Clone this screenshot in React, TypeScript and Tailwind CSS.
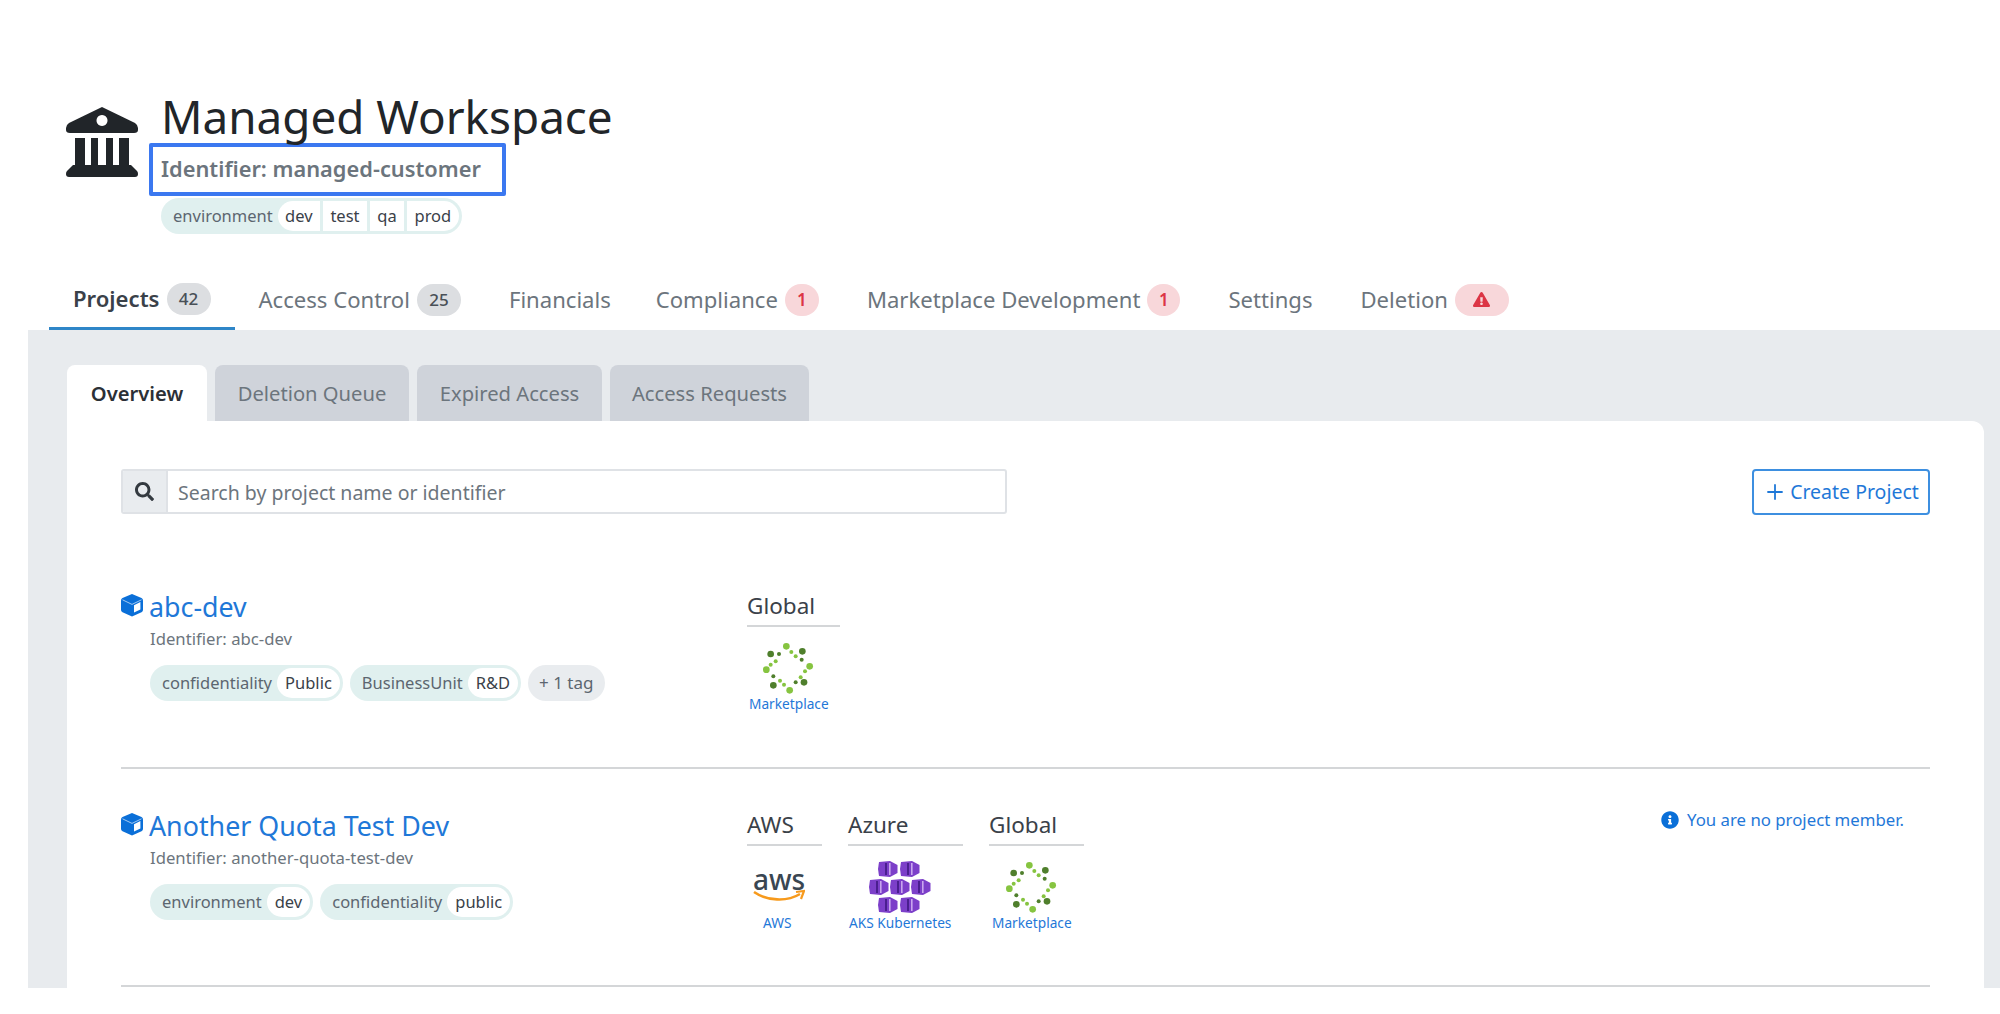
import React from "react";
import { FaSearch, FaInfoCircle, FaExclamationTriangle } from "react-icons/fa";
import { Plus } from "lucide-react";

function BankIcon() {
  return (
    <svg className="mt-[17px] ml-[4px] shrink-0" width="72" height="70" viewBox="0 0 72 70" fill="#212529">
      <path fillRule="evenodd" d="M36 0 L69 16 Q72 18 72 21 V23 Q72 26 68 26 H4 Q0 26 0 23 V21 Q0 18 3 16 Z M36 8 a5.5 5.5 0 1 0 0.01 0 Z" />
      <rect x="9" y="31" width="10" height="27" />
      <rect x="25" y="31" width="7" height="27" />
      <rect x="40" y="31" width="7" height="27" />
      <rect x="53" y="31" width="10" height="27" />
      <path d="M7 58 H65 L71 64 Q72 65 72 67 Q72 70 69 70 H3 Q0 70 0 67 Q0 65 1 64 Z" />
    </svg>
  );
}

function CubeIcon() {
  return (
    <svg className="mb-[5px] ml-[-1px] shrink-0" width="24" height="24" viewBox="0 0 24 24">
      <path d="M12 1 L21.5 5 Q23 5.8 23 7.5 V17 Q23 18.5 21.5 19.2 L12 23.5 L2.5 19.2 Q1 18.5 1 17 V7.5 Q1 5.8 2.5 5 Z" fill="#0a6fd8" />
      <path d="M14 12.2 L20.4 9 V16.6 L14 19.6 Z" fill="#ffffff" />
      <path d="M2.5 6.8 L12 11.4 L21.5 6.8" stroke="#ffffff" strokeWidth="0.9" fill="none" opacity="0.7" />
    </svg>
  );
}

function MarketplaceLogo({ size = 52 }: { size?: number }) {
  const light = "#86c440";
  const dark = "#4f7f2c";
  const big: [number, number, string][] = [
    [197, 195, light], [267, 255, light], [207, 327, light], [137, 265, light],
    [150, 218, dark], [245, 210, dark], [250, 303, dark], [158, 312, dark],
  ];
  const small: [number, number, string][] = [
    [175, 218, dark], [212, 212, light], [225, 225, light], [243, 235, dark],
    [253, 270, light], [240, 288, light], [225, 303, dark], [190, 310, light],
    [178, 298, light], [158, 285, dark], [150, 250, light], [165, 240, light],
  ];
  return (
    <svg width={size} height={size} viewBox="124 182 156 156">
      {big.map(([x, y, c], i) => <circle key={i} cx={x} cy={y} r={10} fill={c} />)}
      {small.map(([x, y, c], i) => <circle key={i} cx={x} cy={y} r={6} fill={c} />)}
    </svg>
  );
}

function AksLogo() {
  const cells: [number, number][] = [[9, 0], [31, 0], [0, 18], [21, 18], [42, 18], [9, 36], [31, 36]];
  return (
    <svg width="62" height="52" viewBox="0 0 62 52">
      {cells.map(([x, y], i) => (
        <g key={i} transform={`translate(${x} ${y})`}>
          <path d="M1 1 L12 0 L19.5 4 V12 L12 16 L1 15 L0 8 Z" fill="#7c3fc9" />
          <rect x="7" y="2" width="2" height="12" fill="#4a1f8f" />
          <rect x="11" y="2" width="1.6" height="12" fill="#c9a6ee" />
        </g>
      ))}
    </svg>
  );
}

function AwsLogo() {
  return (
    <div className="relative flex h-[32px] w-[52px] flex-col items-center">
      <span className="mt-[-6px] text-[28px] leading-[28px] font-medium text-[#3a4652]">aws</span>
      <svg className="absolute bottom-0 left-0" width="52" height="14" viewBox="0 0 52 14" fill="none">
        <path d="M1 3 C14 12 34 13 47 5" stroke="#f79a1c" strokeWidth="2.6" />
        <path d="M43 3 L51 2 L48 10" stroke="#f79a1c" strokeWidth="2.2" />
      </svg>
    </div>
  );
}

function Tag({ name, values, tight }: { name: string; values: string[]; tight?: boolean }) {
  return (
    <span className="flex h-9 items-center rounded-full bg-[#e0f0ef] pr-[3px] pl-[12px] text-[16.5px] text-[#5c6670]">
      <span className="mr-[5px]">{name}</span>
      <span className="flex h-[30px] items-center gap-[3px] overflow-hidden rounded-full">
        {values.map((v) => (
          <span key={v} className={`flex h-full items-center bg-white text-[#3a4149] ${tight ? "px-[7.4px]" : "px-[8px]"}`}>{v}</span>
        ))}
      </span>
    </span>
  );
}

function Cloud({ title, width, logo, label, labelPad }: { title: string; width: string; logo: React.ReactNode; label: string; labelPad: string }) {
  return (
    <div className={`${width} flex flex-col`}>
      <div className="flex h-[38px] items-center border-b-2 border-[#d4d6d8] pb-[2px] text-[22.5px] text-[#3a4149]">{title}</div>
      <div className="mt-[15px] flex h-[52px] items-center">{logo}</div>
      <div className={`mt-[2px] ${labelPad} text-[13.7px] leading-[16px] whitespace-nowrap text-[#1f78d8]`}>{label}</div>
    </div>
  );
}

function ProjectRow({ name, identifier, tags, clouds, member, className }: {
  name: string; identifier: string; tags: React.ReactNode; clouds: React.ReactNode; member?: boolean; className: string;
}) {
  return (
    <div className={`flex border-b-2 border-[#d4d6d8] ${className}`}>
      <div className="w-[626px] shrink-0">
        <div className="flex h-[36px] items-center">
          <CubeIcon />
          <span className="ml-[5px] text-[26.8px] leading-[36px] text-[#1f78d8]">{name}</span>
        </div>
        <div className="mt-[4px] pl-[29px] text-[16.7px] leading-[20px] text-[#6c757d]">Identifier: {identifier}</div>
        <div className="mt-[16px] flex gap-[7px] pl-[29px]">{tags}</div>
      </div>
      <div className="flex items-start">{clouds}</div>
      {member && (
        <div className="mr-[26px] ml-auto flex h-[24px] items-center gap-[8px] text-[16.8px] text-[#1f78d8]">
          <FaInfoCircle className="h-[18px] w-[18px] text-[#0a6fd8]" />
          <span>You are no project member.</span>
        </div>
      )}
    </div>
  );
}

function NavTab({ label, active, badge, extra }: { label: string; active?: boolean; badge?: React.ReactNode; extra?: string }) {
  return (
    <div className={`flex h-[61px] items-center gap-[7px] pl-[24px] text-[22.1px] ${extra ?? "pr-[24px]"} ${active ? "border-b-[3px] border-[#2f86c8] pt-[2px] font-semibold text-[#3a4149]" : "text-[#6c757d]"}`}>
      <span>{label}</span>
      {badge}
    </div>
  );
}

const gray = (n: string) => (
  <span className="flex h-[32px] w-[44px] items-center justify-center rounded-full bg-[#dcdee1] text-[17px] font-medium text-[#495057]">{n}</span>
);
const red = (n: React.ReactNode, w: string) => (
  <span className={`flex h-[32px] ${w} items-center justify-center rounded-full bg-[#f8d7da] text-[17px] font-semibold text-[#dc3545]`}>{n}</span>
);

export default function App() {
  return (
    <div className="h-[1014px] w-[2000px] overflow-hidden bg-white font-['Noto_Sans',sans-serif]">
      <header className="flex h-[269px] pt-[90px] pl-[62px]">
        <BankIcon />
        <div className="ml-[11px]">
          <h1 className="h-[53px] pl-[12px] text-[45.8px] leading-[53px] whitespace-nowrap text-[#212529]">Managed Workspace</h1>
          <div className="flex h-[53px] w-[357px] items-center rounded-[2px] border-[4px] border-[#3b78f0] pl-[8px] text-[21.8px] font-semibold text-[#6c757d]">
            Identifier: managed-customer
          </div>
          <div className="mt-[2px] ml-[12px] inline-flex">
            <Tag name="environment" values={["dev", "test", "qa", "prod"]} tight />
          </div>
        </div>
      </header>

      <nav className="flex pl-[49px]">
        <NavTab label="Projects" active badge={gray("42")} />
        <NavTab label="Access Control" badge={gray("25")} />
        <NavTab label="Financials" extra="pr-[21px]" />
        <NavTab label="Compliance" badge={red("1", "w-[34px]")} />
        <NavTab label="Marketplace Development" badge={red("1", "w-[33px]")} />
        <NavTab label="Settings" />
        <NavTab label="Deletion" badge={red(<FaExclamationTriangle className="h-[17px] w-[17px]" />, "w-[54px]")} />
      </nav>

      <main className="ml-[28px] h-[658px] overflow-hidden bg-[#e8ebee] pt-[35px] pr-[16px] pl-[39px]">
        <div className="flex h-[56px] gap-[8px] text-[20.2px]">
          <div className="flex w-[140px] items-center justify-center rounded-t-[8px] bg-white font-semibold text-[#2b3036]">Overview</div>
          <div className="flex w-[194px] items-center justify-center rounded-t-[8px] bg-[#cfd3da] text-[#6c757d]">Deletion Queue</div>
          <div className="flex w-[185px] items-center justify-center rounded-t-[8px] bg-[#cfd3da] text-[#6c757d]">Expired Access</div>
          <div className="flex w-[199px] items-center justify-center rounded-t-[8px] bg-[#cfd3da] text-[#6c757d]">Access Requests</div>
        </div>

        <section className="h-[600px] rounded-tr-[12px] bg-white pt-[48px] pr-[54px] pl-[54px]">
          <div className="flex items-start justify-between">
            <div className="flex h-[45px] w-[886px] overflow-hidden rounded-[3px] border-2 border-[#dfe2e6]">
              <div className="flex w-[45px] items-center justify-center border-r-2 border-[#dfe2e6] bg-[#e9ecef]">
                <FaSearch className="h-[19px] w-[19px] text-[#343a40]" />
              </div>
              <div className="flex flex-1 items-center pt-[2px] pl-[10px] text-[19.5px] text-[#6c757d]">Search by project name or identifier</div>
            </div>
            <div className="flex h-[46px] w-[178px] items-center justify-center gap-[3px] rounded-[4px] border-2 border-[#3d8fe0] text-[19.5px] text-[#1f78d8]">
              <Plus className="h-[24px] w-[24px]" strokeWidth={1.8} />
              <span>Create Project</span>
            </div>
          </div>

          <ProjectRow
            name="abc-dev"
            identifier="abc-dev"
            className="mt-[74px] h-[180px]"
            tags={
              <>
                <Tag name="confidentiality" values={["Public"]} />
                <Tag name="BusinessUnit" values={["R&D"]} />
                <span className="flex h-9 items-center rounded-full bg-[#e9ecef] px-[11px] text-[17px] text-[#5c6670]">+ 1 tag</span>
              </>
            }
            clouds={
              <Cloud title="Global" width="w-[93px]" label="Marketplace" labelPad="pl-[2px]" logo={<div className="pl-[15px]"><MarketplaceLogo /></div>} />
            }
          />

          <ProjectRow
            name="Another Quota Test Dev"
            identifier="another-quota-test-dev"
            className="h-[218px] pt-[39px]"
            member
            tags={
              <>
                <Tag name="environment" values={["dev"]} />
                <Tag name="confidentiality" values={["public"]} />
              </>
            }
            clouds={
              <div className="flex gap-[26px]">
                <Cloud title="AWS" width="w-[75px]" label="AWS" labelPad="pl-[16px]" logo={<div className="pl-[6px]"><AwsLogo /></div>} />
                <Cloud title="Azure" width="w-[115px]" label="AKS Kubernetes" labelPad="pl-[1px]" logo={<div className="pl-[21px]"><AksLogo /></div>} />
                <Cloud title="Global" width="w-[95px]" label="Marketplace" labelPad="pl-[3px]" logo={<div className="pl-[16px]"><MarketplaceLogo /></div>} />
              </div>
            }
          />
        </section>
      </main>
    </div>
  );
}
